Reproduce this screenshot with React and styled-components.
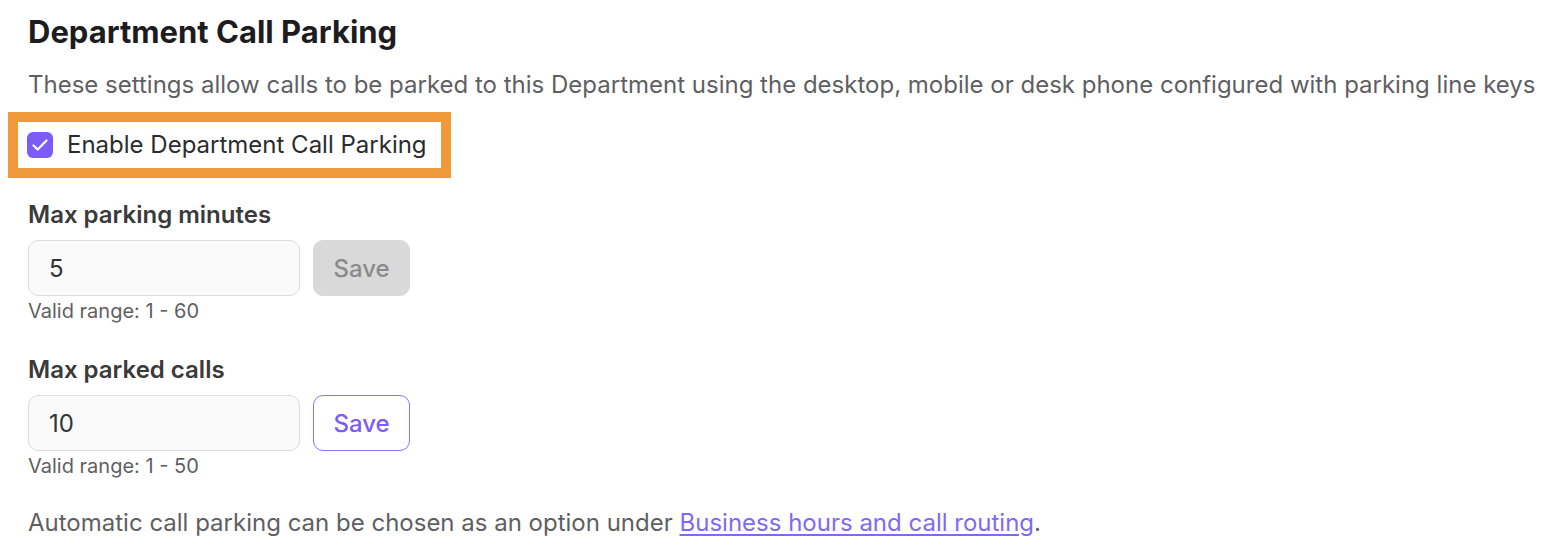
import React from "react";
import styled, { createGlobalStyle } from "styled-components";

const Global = createGlobalStyle`
  html, body { margin: 0; padding: 0; background: #ffffff; }
  body { font-family: Inter, "Noto Sans", "Liberation Sans", sans-serif; -webkit-font-smoothing: antialiased; }
`;

const Page = styled.div`
  padding: 14px 28px 0 28px;
  display: flex;
  flex-direction: column;
  align-items: flex-start;
`;

const Title = styled.h2`
  margin: 0;
  font-size: 31px;
  line-height: 36px;
  font-weight: 700;
  color: #1d1d1f;
`;

const Description = styled.p`
  margin: 21px 0 0 0;
  font-size: 24px;
  line-height: 28px;
  color: #5f5f63;
  white-space: nowrap;
`;

const Highlight = styled.div`
  margin: 13px 0 0 -20px;
  border: 10px solid #f0993a;
  padding: 9px 14px 9px 9px;
  display: flex;
  align-items: center;
  gap: 14px;
`;

const CheckBox = styled.span`
  width: 26px;
  height: 26px;
  border-radius: 6px;
  background: #7b5cf6;
  display: flex;
  align-items: center;
  justify-content: center;
`;

const CheckLabel = styled.span`
  font-size: 24px;
  line-height: 28px;
  color: #2c2c2e;
`;

const FieldLabel = styled.div`
  margin-top: ${(p) => p.$top}px;
  font-size: 24px;
  line-height: 28px;
  font-weight: 600;
  color: #3a3a3c;
`;

const FieldRow = styled.div`
  margin-top: 11px;
  display: flex;
  gap: 13px;
`;

const Input = styled.div`
  box-sizing: border-box;
  width: 272px;
  height: 56px;
  border: 1px solid #dcdcdc;
  border-radius: 10px;
  background: #fafafa;
  padding: 0 20px;
  display: flex;
  align-items: center;
  font-size: 24px;
  color: #333336;
`;

const SaveButton = styled.button`
  box-sizing: border-box;
  width: 97px;
  height: 56px;
  border-radius: 10px;
  font-family: inherit;
  font-size: 24px;
  font-weight: 500;
  cursor: pointer;
  padding: 0;
  border: ${(p) => (p.$disabled ? "1px solid #d9d9d9" : "1.5px solid #8b72fb")};
  background: ${(p) => (p.$disabled ? "#d9d9d9" : "#ffffff")};
  color: ${(p) => (p.$disabled ? "#8a8a8a" : "#7b5cf6")};
`;

const Hint = styled.div`
  margin-top: 3px;
  font-size: 20px;
  line-height: 24px;
  color: #5f5f63;
`;

const Footer = styled.p`
  margin: 31px 0 0 0;
  font-size: 24px;
  line-height: 28px;
  color: #5f5f63;
`;

const Link = styled.a`
  color: #8069f8;
  text-decoration: underline;
  text-underline-offset: 3px;
`;

function Field({ label, value, hint, disabled, top }) {
  return (
    <>
      <FieldLabel $top={top}>{label}</FieldLabel>
      <FieldRow>
        <Input>{value}</Input>
        <SaveButton $disabled={disabled}>Save</SaveButton>
      </FieldRow>
      <Hint>{hint}</Hint>
    </>
  );
}

export default function App() {
  return (
    <>
      <Global />
      <Page>
        <Title>Department Call Parking</Title>
        <Description>
          These settings allow calls to be parked to this Department using the desktop, mobile or desk phone configured with parking line keys
        </Description>
        <Highlight>
          <CheckBox>
            <svg width="20" height="20" viewBox="0 0 20 20" fill="none">
              <path d="M3.5 10.5l4.2 4L16.5 5.5" stroke="#fff" strokeWidth="2.2" strokeLinecap="round" strokeLinejoin="round" />
            </svg>
          </CheckBox>
          <CheckLabel>Enable Department Call Parking</CheckLabel>
        </Highlight>
        <Field top={23} label="Max parking minutes" value="5" hint="Valid range: 1 - 60" disabled />
        <Field top={33} label="Max parked calls" value="10" hint="Valid range: 1 - 50" />
        <Footer>
          Automatic call parking can be chosen as an option under <Link href="#">Business hours and call routing</Link>.
        </Footer>
      </Page>
    </>
  );
}
